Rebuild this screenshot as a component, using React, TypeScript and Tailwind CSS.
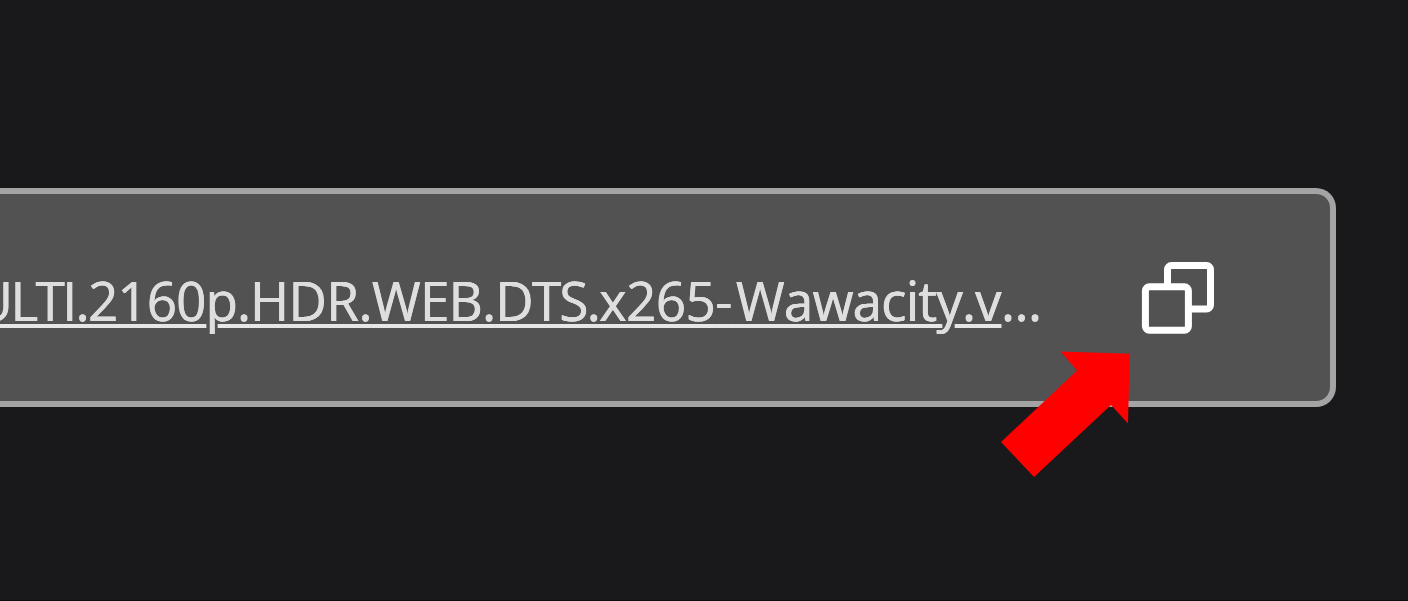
function CopyIcon() {
  return (
    <svg width="76" height="76" viewBox="0 0 76 76" fill="none" stroke="#ffffff" strokeWidth="7" className="block shrink-0">
      <path d="M27.5 25V9.5a4 4 0 0 1 4-4h35a4 4 0 0 1 4 4V45a4 4 0 0 1-4 4H51" />
      <rect x="5.4" y="26.8" width="43" height="43.4" rx="4" />
    </svg>
  );
}

function Arrow() {
  return (
    <svg width="130" height="128" viewBox="1000 350 130 128" className="absolute left-[1000px] top-[350px]">
      <polygon points="1001,442 1077,370.5 1060.5,351.5 1129.7,353.7 1128,423.5 1111,405 1034,477" fill="#ff0000" />
    </svg>
  );
}

export default function App() {
  return (
    <main className="relative h-[601px] w-[1408px] overflow-hidden border-b border-[#0c0c0d] bg-[#19191b] pt-[188px]">
      <div className="flex h-[219px] w-[1336px] items-center justify-end overflow-hidden rounded-r-[20px] border-y-6 border-r-6 border-[#a4a4a4] bg-[#525252] pr-[114px]">
        <div className="mr-[98px] mt-[4px] origin-right scale-x-[0.96] whitespace-nowrap font-['Open_Sans','Noto_Sans',sans-serif] text-[55px] leading-[76px] text-[#dedede] [text-shadow:0.4px_0_#dedede,-0.4px_0_#dedede]">
          <a className="underline decoration-[#e6e6e6] decoration-[4px] underline-offset-[3px]">
            <span className="tracking-[-2.5px]">MULT</span>
            <span className="tracking-[-1.5px]">I.</span>
            <span className="tracking-[-0.85px]">2160p.</span>
            <span className="tracking-[-0.5px]">HDR.</span>
            <span className="tracking-[-0.7px]">WEB.</span>
            <span className="tracking-[-1.7px]">DTS.</span>
            <span className="tracking-[-0.5px]">x265</span>
            <span className="tracking-[3.8px]">-</span>
            <span className="tracking-[-0.8px]">Wawacity.</span>
            <span className="tracking-[-0.5px]">v</span>
          </a>
          <span className="tracking-[-0.4px]">...</span>
        </div>
        <CopyIcon />
      </div>
      <Arrow />
    </main>
  );
}
